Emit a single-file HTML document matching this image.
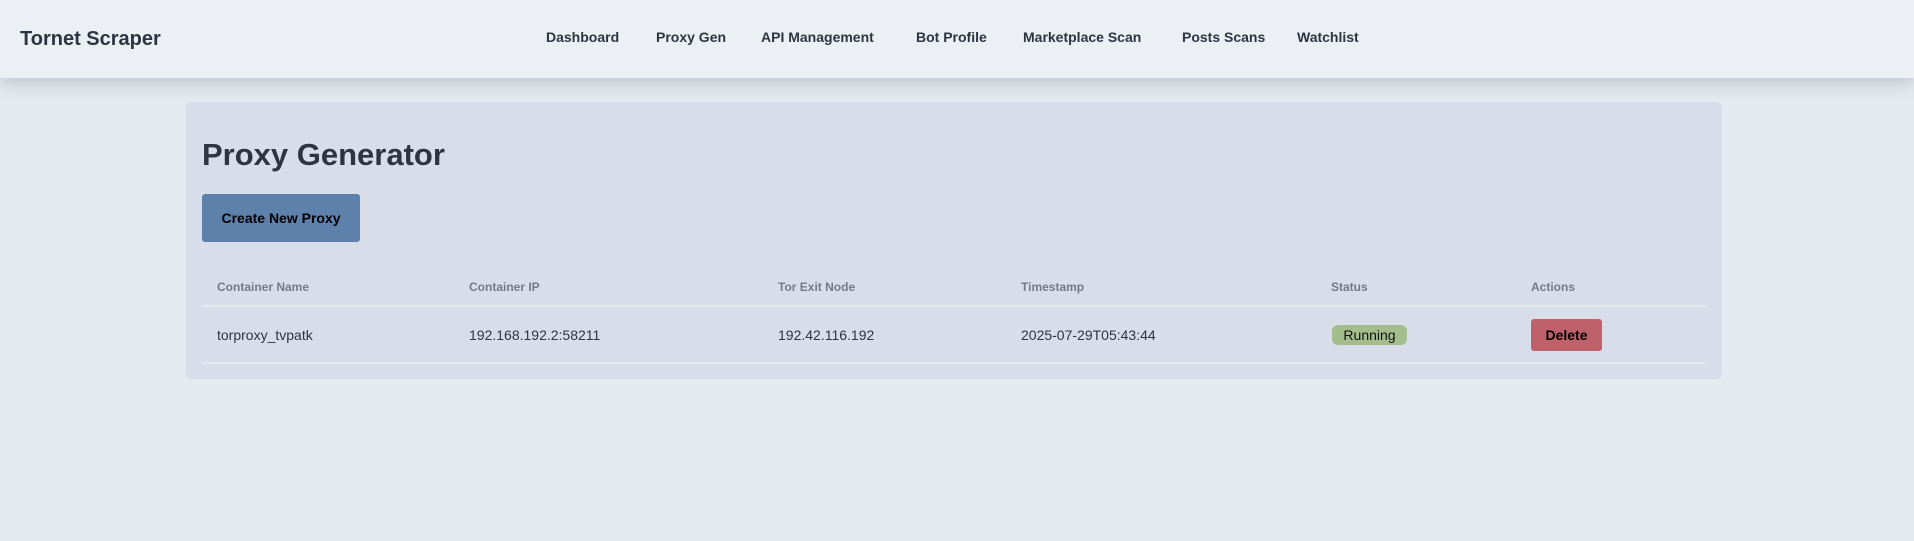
<!DOCTYPE html>
<html><head><style>
*{margin:0;padding:0;box-sizing:border-box}
body{width:1914px;height:541px;background:#e5e9f0;font-family:"Liberation Sans",sans-serif;color:#2e3440;position:relative;overflow:hidden}
.hdr{position:absolute;left:0;top:0;width:1914px;height:78px;background:#eceff4;box-shadow:0 4px 16px rgba(46,52,64,0.22)}
.brand{position:absolute;left:20px;top:28px;font-size:20px;font-weight:bold}
.nav a{position:absolute;top:29px;font-size:14px;font-weight:bold;color:#2e3440;text-decoration:none}
.card{position:absolute;left:186px;top:102px;width:1536px;height:277px;background:#d8dee9;border-radius:5px}
h1{position:absolute;left:202px;top:137px;font-size:31px;font-weight:bold}
.btn{position:absolute;left:202px;top:194px;width:158px;height:48px;background:#5e81ac;border-radius:3px;font-size:14px;font-weight:bold;color:#000;text-align:center;line-height:48px}
.th{position:absolute;top:280px;font-size:12px;font-weight:bold;color:#737b8a}
.td{position:absolute;top:327px;font-size:14px;color:#2e3440}
.line{position:absolute;left:202px;width:1504px;height:2px;background:#e5e9f0}
.run{position:absolute;left:1332px;top:325px;width:75px;height:20px;background:#a3be8c;border-radius:6px;font-size:14px;text-align:center;line-height:20px;color:#111}
.del{position:absolute;left:1531px;top:319px;width:71px;height:32px;background:#bf616a;border-radius:3px;font-size:14px;font-weight:bold;text-align:center;line-height:32px;color:#000}
</style></head><body>
<div class="hdr">
<div class="brand">Tornet Scraper</div>
<div class="nav">
<a style="left:546px">Dashboard</a>
<a style="left:656px">Proxy Gen</a>
<a style="left:761px">API Management</a>
<a style="left:916px">Bot Profile</a>
<a style="left:1023px">Marketplace Scan</a>
<a style="left:1182px">Posts Scans</a>
<a style="left:1297px">Watchlist</a>
</div>
</div>
<div class="card"></div>
<h1>Proxy Generator</h1>
<div class="btn">Create New Proxy</div>
<div class="th" style="left:217px">Container Name</div>
<div class="th" style="left:469px">Container IP</div>
<div class="th" style="left:778px">Tor Exit Node</div>
<div class="th" style="left:1021px">Timestamp</div>
<div class="th" style="left:1331px">Status</div>
<div class="th" style="left:1531px">Actions</div>
<div class="line" style="top:305px"></div>
<div class="td" style="left:217px">torproxy_tvpatk</div>
<div class="td" style="left:469px">192.168.192.2:58211</div>
<div class="td" style="left:778px">192.42.116.192</div>
<div class="td" style="left:1021px">2025-07-29T05:43:44</div>
<div class="run">Running</div>
<div class="del">Delete</div>
<div class="line" style="top:362px"></div>
</body></html>
